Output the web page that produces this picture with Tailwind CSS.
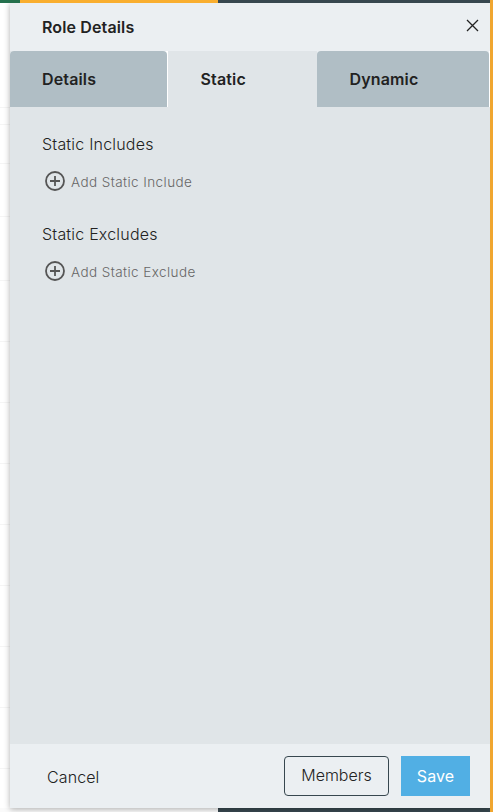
<!DOCTYPE html>
<html lang="en">
<head>
  <meta charset="UTF-8" />
  <meta name="viewport" content="width=device-width, initial-scale=1.0"/>
  <title>Role Details</title>
  <script src="https://cdn.jsdelivr.net/npm/@tailwindcss/browser@4"></script>
</head>
<body class="flex w-[493px] h-[812px] overflow-hidden bg-white font-['Inter',sans-serif] text-[#222]">
  <div class="flex flex-col w-[490px] h-full">
    <!-- Top bar -->
    <div class="flex h-[3px] shrink-0">
      <div class="w-5 bg-[#24704d]"></div>
      <div class="w-[198px] bg-[#f9ae2f]"></div>
      <div class="flex-1 bg-[#37474f]"></div>
    </div>

    <div class="flex h-[805px] shrink-0">
      <!-- Edge of the table behind the panel -->
      <div class="w-[10px] shrink-0">
        <div class="h-[105px] border-b border-[#f5f5f5]"></div>
        <div class="h-[17px] border-b border-[#f5f5f5]"></div>
        <div class="h-[39px] border-b border-[#f5f5f5]"></div>
        <div class="h-[53px] border-b border-[#f5f5f5]"></div>
        <div class="h-16 border-b border-[#f5f5f5]"></div>
        <div class="h-[61px] border-b border-[#f5f5f5]"></div>
        <div class="h-[61px] border-b border-[#f5f5f5]"></div>
        <div class="h-[61px] border-b border-[#f5f5f5]"></div>
        <div class="h-[61px] border-b border-[#f5f5f5]"></div>
        <div class="h-[61px] border-b border-[#f5f5f5]"></div>
        <div class="h-[61px] border-b border-[#f5f5f5]"></div>
        <div class="h-[61px] border-b border-[#f5f5f5]"></div>
        <div class="h-[61px] border-b border-[#f5f5f5]"></div>
      </div>

      <!-- Panel -->
      <div class="relative z-10 flex flex-col w-[480px] bg-[#e0e5e8] shadow-[0_1px_6px_rgba(0,0,0,0.32)] [clip-path:inset(0_0_-4px_-10px)]">
        <div class="flex items-center justify-between h-12 pl-8 pr-[11px] bg-[#ebeff2]">
          <h1 class="text-base font-semibold tracking-[0.13px]">Role Details</h1>
          <button class="pb-[3px]" aria-label="Close">
            <svg class="w-[13px] h-[13px]" viewBox="0 0 13 13" fill="none" stroke="#222" stroke-width="1.3">
              <path d="M1 1l11 11M12 1L1 12"/>
            </svg>
          </button>
        </div>

        <!-- Tabs -->
        <div class="flex h-14 text-base font-semibold tracking-[0.15px]">
          <div class="flex w-[158px] bg-white rounded-tl">
            <div class="flex items-center w-[157px] pl-8 bg-[#b0bec5] rounded-t">Details</div>
          </div>
          <div class="flex items-center w-[149px] pl-[32.5px]">Static</div>
          <div class="flex w-[173px] bg-[#ebeff2]">
            <div class="flex items-center w-[172px] pl-[32.5px] bg-[#b0bec5] rounded-t">Dynamic</div>
            <div class="w-px bg-white"></div>
          </div>
        </div>

        <div class="flex-1 pl-8 pt-[25px]">
          <div class="text-base leading-6 font-light tracking-[0.2px]">Static Includes</div>
          <div class="flex items-center h-6 mt-[13px] pl-[3px] text-[13.5px] font-light tracking-[0.42px] text-[#666]">
            <svg class="w-5 h-5 mr-[6px]" viewBox="0 0 20 20" fill="none" stroke="#555" stroke-width="1.8">
              <circle cx="10" cy="10" r="9"/>
              <path d="M10 5v10M5 10h10"/>
            </svg>
            <span class="pt-0.5">Add Static Include</span>
          </div>
          <div class="mt-[29px] text-base leading-6 font-light tracking-[0.2px]">Static Excludes</div>
          <div class="flex items-center h-6 mt-[13px] pl-[3px] text-[13.5px] font-light tracking-[0.42px] text-[#666]">
            <svg class="w-5 h-5 mr-[6px]" viewBox="0 0 20 20" fill="none" stroke="#555" stroke-width="1.8">
              <circle cx="10" cy="10" r="9"/>
              <path d="M10 5v10M5 10h10"/>
            </svg>
            <span class="pt-0.5">Add Static Exclude</span>
          </div>
        </div>

        <!-- Footer -->
        <div class="flex items-center h-16 pl-[37px] pr-5 bg-[#ebeff2] text-base font-light">
          <button class="mr-auto pt-0.5 tracking-[0.1px]">Cancel</button>
          <button class="w-[105px] h-10 mr-3 pb-0.5 border border-[#37474f] rounded">Members</button>
          <button class="w-[69px] h-10 bg-[#51afe4] font-normal text-white tracking-[0.1px]">Save</button>
        </div>
      </div>
    </div>

    <div class="flex h-1">
      <div class="w-[218px] bg-[#fafafa]"></div>
      <div class="flex-1 bg-[#37474f]"></div>
    </div>
  </div>
  <div class="w-[3px] bg-[#f0a630]"></div>
</body>
</html>
